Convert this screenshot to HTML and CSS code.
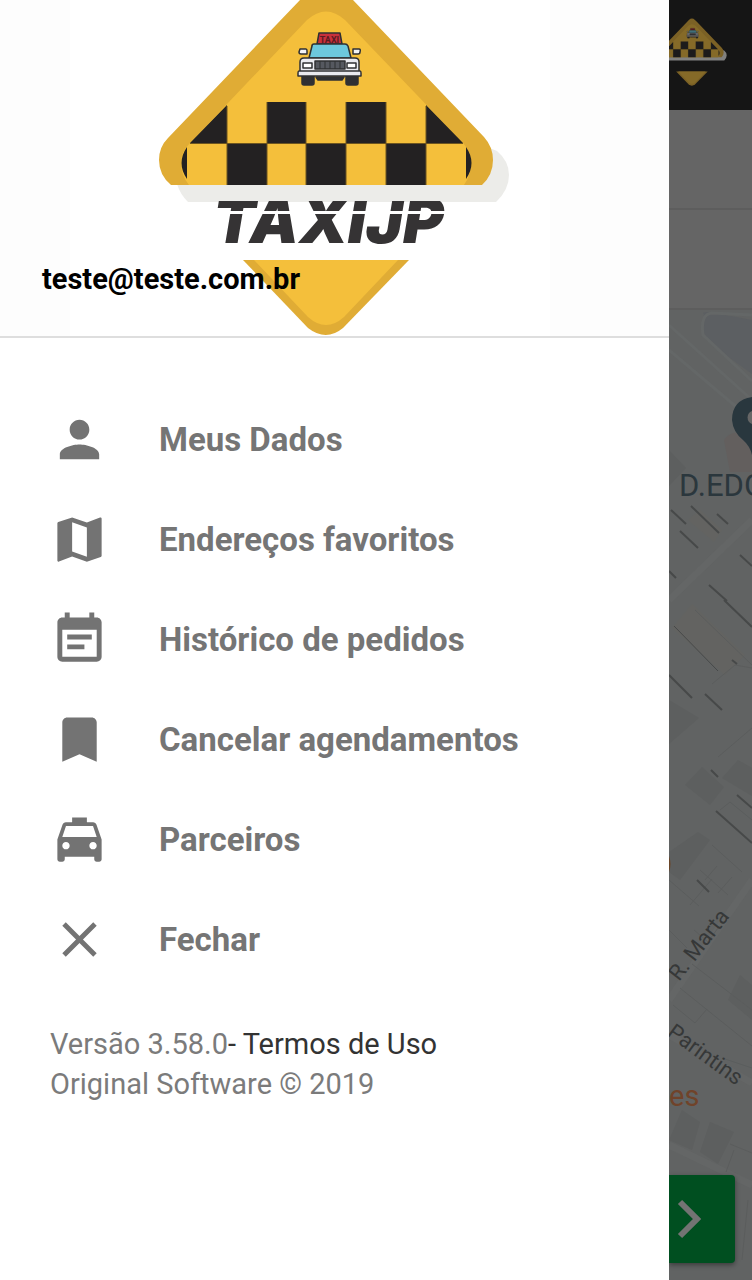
FILE: index.html
```html
<!DOCTYPE html>
<html lang="pt-BR">
<head>
<meta charset="utf-8">
<meta name="viewport" content="width=device-width, initial-scale=1">
<title>Taxi JP</title>
<link rel="stylesheet" href="styles.css">
</head>
<body>
<div class="app">
    <aside class="drawer">
        <header class="drawer-header">
            <svg class="logo" viewBox="70 0 480 336" role="img" aria-label="Taxi JP">
                <g id="sign">
                    <!-- shadow -->
                    <path fill="#ecece9" d="M177 184 Q180 194 188 202 H496 Q509 190 509 175 Q509 161 497 151 L470 140 Z"/>
                    <!-- upper half -->
                    <path fill="#e0ac35" d="M171 185 Q159 175 159 160 Q159 147 168 138 L300 0 L310 -11 Q326 -25 342 -11 L353 0 L484 137 Q493 147 493 160 Q493 175 482 185 Z"/>
                    <path fill="#f4bf3b" d="M189 185 Q181 175 181 163 Q181 152 190 143 L307 20 Q326 3 345 20 L463 143 Q471 152 471 163 Q471 175 464 185 Z"/>
                    <path fill="#232122" d="M190 143 L227 105 V143 Z M267 102 h39 v41 h-39 Z M346 102 h40 v41 h-40 Z M426 105 L463 143 H426 Z M227 144 h40 v41 h-40 Z M306 144 h40 v41 h-40 Z M386 144 h40 v41 h-40 Z M187 147 V179 Q176 163 187 147 Z M466 147 V179 Q477 163 466 147 Z"/>
                    <path fill="none" stroke="#6d5520" d="M190 143.500 H463 M227 106 V185 M267 102 V185 M306 102 V185 M346 102 V185 M386 102 V185 M426 106 V185"/>
                    <!-- car -->
                    <g stroke="#2f3033" stroke-width="1.500" stroke-linejoin="round">
                        <path fill="#2f3033" d="M302 76 h12 v7 q0 2 -2 2 h-8 q-2 0 -2 -2 Z M346 76 h12 v7 q0 2 -2 2 h-8 q-2 0 -2 -2 Z M316 77 h28 l-2 3 h-24 Z"/>
                        <path fill="#c9303b" d="M319 33 h21 l2 11 h-25 Z"/>
                        <path fill="#f3f3f5" d="M300 49 h6 q1 0 1 2 v3 h-6 q-2 0 -2 -2 Z M353 49 h6 q2 0 1 3 q0 2 -2 2 h-5 Z"/>
                        <path fill="#6dc8dd" d="M314 44 H345 Q347 44 348 46 L351 58 H309 L312 46 Q312 44 314 44 Z"/>
                        <path fill="#e9eaef" d="M304 58 H355 Q359 58 359 62 V72 H300 V62 Q300 58 304 58 Z"/>
                        <path fill="#fff" d="M303 63 h9 v5 h-9 Z M347 63 h9 v5 h-9 Z"/>
                        <path fill="#55585f" d="M315 61 h30 v8 h-30 Z"/>
                        <path stroke-width="1" d="M320 61 v8 M325 61 v8 M330 61 v8 M335 61 v8 M340 61 v8"/>
                        <path fill="#e9eaef" d="M299 71 H360 Q361 71 361 73 V76 H298 V73 Q298 71 299 71 Z"/>
                    </g>
                    <text class="car-sign" x="329.500" y="43" text-anchor="middle">TAXI</text>
                    <!-- lower half -->
                    <path fill="#e0ac35" d="M243 260 H409 L343 328 Q326 342 308 328 Z"/>
                    <path fill="#f4bf3b" d="M254 260 H398 L344 317 Q326 333 308 317 Z"/>
                </g>
                <text class="wordmark" x="213" y="243">TAXIJP</text>
                <path fill="#ecece9" d="M205 196 H460 V201 H205 Z"/>
                <path fill="#fff" d="M205 211 H460 V214 H205 Z"/>
            </svg>
            <p class="email">teste@teste.com.br</p>
        </header>
        <nav class="menu">
            <a class="menu-item" href="#dados">
                <svg class="icon" viewBox="0 0 24 24" aria-hidden="true"><path d="M12 12c2.210 0 4-1.790 4-4s-1.790-4-4-4-4 1.790-4 4 1.790 4 4 4zm0 2c-2.670 0-8 1.340-8 4v2h16v-2c0-2.660-5.330-4-8-4z"/></svg>
                Meus Dados
            </a>
            <a class="menu-item" href="#enderecos">
                <svg class="icon" viewBox="0 0 24 24" aria-hidden="true"><path d="M20.500 3l-.16.030L15 5.100 9 3 3.360 4.900c-.21.070-.36.250-.36.480V20.500c0 .28.220.5.500.5l.16-.03L9 18.900l6 2.100 5.640-1.900c.21-.07.360-.25.360-.48V3.500c0-.28-.22-.5-.5-.5zM15 19l-6-2.110V5l6 2.110V19z"/></svg>
                Endereços favoritos
            </a>
            <a class="menu-item" href="#historico">
                <svg class="icon" viewBox="0 0 24 24" aria-hidden="true"><path d="M17 10H7v2h10v-2zm2-7h-1V1h-2v2H8V1H6v2H5c-1.110 0-1.990.9-1.990 2L3 19c0 1.100.89 2 2 2h14c1.100 0 2-.9 2-2V5c0-1.100-.9-2-2-2zm0 16H5V8h14v11zm-5-5H7v2h7v-2z"/></svg>
                Histórico de pedidos
            </a>
            <a class="menu-item" href="#agendamentos">
                <svg class="icon" viewBox="0 0 24 24" aria-hidden="true"><path d="M17 3H7c-1.100 0-1.990.9-1.990 2L5 21l7-3 7 3V5c0-1.100-.9-2-2-2z"/></svg>
                Cancelar agendamentos
            </a>
            <a class="menu-item" href="#parceiros">
                <svg class="icon" viewBox="0 0 24 24" aria-hidden="true"><path d="M18.920 6.010C18.720 5.420 18.160 5 17.500 5H15V3H9v2H6.500c-.66 0-1.210.42-1.420 1.010L3 12v8c0 .55.450 1 1 1h1c.55 0 1-.45 1-1v-1h12v1c0 .55.450 1 1 1h1c.55 0 1-.45 1-1v-8l-2.080-5.990zM6.500 16c-.83 0-1.500-.67-1.500-1.500S5.670 13 6.500 13s1.500.67 1.500 1.500S7.330 16 6.500 16zm11 0c-.83 0-1.500-.67-1.500-1.500s.67-1.500 1.500-1.500 1.500.67 1.500 1.500-.67 1.500-1.500 1.500zM5 11l1.500-4.500h11L19 11H5z"/></svg>
                Parceiros
            </a>
            <button class="menu-item" type="button">
                <svg class="icon" viewBox="0 0 24 24" aria-hidden="true"><path d="M19 6.410L17.590 5 12 10.590 6.410 5 5 6.410 10.590 12 5 17.590 6.410 19 12 13.410 17.590 19 19 17.590 13.410 12z"/></svg>
                Fechar
            </button>
        </nav>
        <footer class="version">
            <p>Versão 3.58.0<a class="terms" href="#termos">- Termos de Uso</a></p>
            <p>Original Software © 2019</p>
        </footer>
    </aside>
    <main class="screen">
        <div class="topbar">
            <svg class="topbar-logo" viewBox="0 0 83 110" aria-hidden="true">
                <use href="#sign" transform="translate(-39 22) scale(.19)"/>
            </svg>
        </div>
        <div class="address"></div>
        <div class="address"></div>
        <svg class="map" viewBox="669 310 83 970" preserveAspectRatio="xMinYMin slice">
            <!-- blocks -->
            <path fill="#5c5f62" d="M704 314 Q700 312 710 312 L752 320 V374 L716 348 Q702 335 702 325 Z"/>
            <path fill="none" stroke="#646767" stroke-width="3" d="M669 325 L752 400 M752 315 L712 313 Q700 314 703 335 L752 381 M669 350 L740 410"/>
            <path fill="#635f5e" d="M724 440 Q735 425 752 440 V472 H730 Z"/>
            <path fill="#5d5f5f" d="M669 450 l17 18 -17 18 Z M669 700 l30 18 -30 26 Z M702 767 l22 20 -14 18 -25 -20 Z M738 760 l14 8 v28 l-30 -18 Z M698 832 l12 8 -30 40 -11 -8 v-20 Z M740 975 l12 10 v35 l-24 -20 Z M682 1110 l18 12 -8 28 -23 -10 Z M710 1122 l24 10 -16 32 -18 -12 Z"/>
            <path fill="#636361" d="M692 604 L745 655 725 675 672 628 Z M700 510 l22 20 -8 12 -26 -22 Z"/>
            <!-- streets -->
            <g fill="none" stroke="#646666" stroke-width="7">
                <path d="M669 600 L752 520"/>
                <path d="M669 1000 L752 880"/>
                <path d="M669 1035 L752 1083"/>
                <path d="M669 1145 L752 1185"/>
            </g>
            <g fill="none" stroke="#5b5d5d">
                <path d="M695 610 L752 665 M712 684 L735 665 L752 668 M718 757 L752 728 M720 810 L730 802 L752 820 M700 870 l28 25 M712 845 l30 27 M705 880 l12 -14 M718 893 l14 -16 M692 964 L752 1010 M680 988 L752 1046 M673 1005 l22 18 12 -14 M722 1058 L752 1068 M730 1144 L752 1153 M669 880 l30 26 M690 905 l22 -26"/>
                <path d="M694 930 l14 12 10 -14 M734 1150 l-8 22 M748 1200 l-6 60 M669 930 l18 18"/>
            </g>
            <g fill="none" stroke="#474949" stroke-width="2">
                <path d="M671 510 l15 14 M691 506 l28 27 M680 531 l18 17 M717 514 l11 10 M740 555 l12 11 M709 585 l18 16 M669 571 l7 7 M724 600 L752 627 M669 675 l23 23 M705 694 l17 16 M732 660 l5 4 M711 770 l7 7 M716 811 L752 843 M737 795 l15 13 M697 880 l12 12"/>
                <path stroke-width="1" d="M674 626 L718 671"/>
            </g>
            <path fill="#6a4528" d="M669 856 q3 8 0 16 Z"/>
            <!-- pin -->
            <path fill="#29373e" d="M752 397 Q732 400 732 420 Q733 432 743 440 Q750 446 752 455 Z"/>
            <path fill="#666" d="M752 411 a7 7 0 0 0 0 13 Z"/>
            <text class="place" x="679" y="496">D.EDG</text>
            <text class="street" transform="translate(679 982) rotate(-52)">R. Marta</text>
            <text class="street" transform="translate(666 1035) rotate(36)">Parintins</text>
            <text class="shop" x="669" y="1106">es</text>
        </svg>
        <button class="next" type="button" aria-label="Avançar">
            <svg class="chevron" viewBox="0 0 24 40" aria-hidden="true"><path d="M3 3 L20 20 L3 37"/></svg>
        </button>
    </main>
</div>
</body>
</html>
```
FILE: styles.css
```css
* {
    box-sizing: border-box;
}

body {
    margin: 0;
    font-family: Roboto, sans-serif;
    background: #fff;
}

p {
    margin: 0;
}

.app {
    display: flex;
    min-height: 100vh;
}

/* drawer */
.drawer {
    flex: 0 0 89%;
    background: #fff;
}

.drawer-header {
    position: relative;
    padding-left: 70px;
    background: #fdfdfd;
    border-bottom: 2px solid #dedede;
}

.logo {
    display: block;
    width: 480px;
    height: 336px;
    background: #fff;
}

.wordmark {
    font: italic 900 62px Inter, sans-serif;
    fill: #353334;
}

.car-sign {
    font: bold 9px Roboto, sans-serif;
    fill: #5a1a22;
}

.email {
    position: absolute;
    left: 42px;
    bottom: 40px;
    font-size: 29px;
    font-weight: 700;
    line-height: 34px;
    color: #000;
}

.menu {
    display: flex;
    flex-direction: column;
    padding-top: 51px;
}

.menu-item {
    display: flex;
    align-items: center;
    gap: 50px;
    height: 100px;
    padding: 0 50px;
    border: 0;
    background: none;
    font-family: inherit;
    font-size: 33px;
    font-weight: 700;
    color: #757575;
    text-align: left;
    text-decoration: none;
}

.icon {
    width: 59px;
    height: 59px;
    fill: #737373;
}

.version {
    padding: 35px 50px;
    font-size: 29px;
    line-height: 40px;
    color: #7b7b7b;
}

.terms {
    color: #333;
    text-decoration: none;
}

/* dimmed screen behind the drawer */
.screen {
    position: relative;
    flex: 1;
    display: flex;
    flex-direction: column;
    min-width: 0;
    overflow: hidden;
    background: #656565;
}

.topbar {
    height: 110px;
    background: #151515;
}

.topbar-logo {
    display: block;
    width: 83px;
    height: 110px;
    opacity: 0.5;
}

.address {
    height: 100px;
    border-bottom: 2px solid #5d5d5d;
}

.map {
    flex: 1;
    display: block;
    width: 100%;
    min-height: 0;
    background: #616363;
}

.place {
    font-size: 31px;
    fill: #2b373d;
}

.street {
    font-size: 22px;
    fill: #363838;
}

.shop {
    font-size: 29px;
    fill: #70432a;
}

.next {
    position: absolute;
    left: 0;
    right: 17px;
    bottom: 17px;
    height: 88px;
    padding: 0 8px;
    border: 0;
    border-radius: 0 4px 4px 0;
    background: #004f20;
    box-shadow: 0 2px 5px rgba(0, 0, 0, 0.4);
    text-align: left;
}

.chevron {
    display: block;
    width: 24px;
    height: 40px;
    fill: none;
    stroke: #737373;
    stroke-width: 6;
}
```
